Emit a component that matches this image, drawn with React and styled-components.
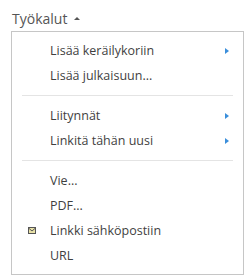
import React from 'react';
import styled, { createGlobalStyle } from 'styled-components';

const Global = createGlobalStyle`
  html, body { margin: 0; padding: 0; background: #fff; }
  body { font-family: "Open Sans", "Liberation Sans", sans-serif; color: #444; }
`;

const Wrap = styled.div`
  width: 247px;
  height: 280px;
  padding: 8px 4px 0 11px;
  box-sizing: border-box;
`;

const Toggle = styled.div`
  display: flex;
  align-items: center;
  gap: 7px;
  height: 20px;
  padding-left: 1px;
  font-size: 14px;
  color: #555;
`;

const Caret = styled.span`
  width: 0;
  height: 0;
  border-left: 3px solid transparent;
  border-right: 3px solid transparent;
  border-bottom: 3px solid #555;
`;

const Menu = styled.div`
  margin-top: 3px;
  width: 233px;
  box-sizing: border-box;
  border: 1px solid #c6c6c6;
  padding: 6px 0 6px;
`;

const Item = styled.div`
  display: flex;
  align-items: center;
  height: 25px;
  padding: 0 14px 0 16px;
  font-size: 12.5px;
  color: #3f3f3f;
`;

const IconSlot = styled.span`
  width: 22px;
  display: flex;
  align-items: center;
`;

const Label = styled.span`
  flex: 1;
`;

const SubArrow = styled.span`
  width: 0;
  height: 0;
  border-top: 3px solid transparent;
  border-bottom: 3px solid transparent;
  border-left: 4px solid #3a8edb;
`;

const Divider = styled.div`
  height: 1px;
  margin: 7px 10px 7px;
  background: #e4e4e4;
`;

const Mail = () => (
  <svg width="8" height="7" viewBox="0 0 8 7">
    <rect x="0.5" y="0.5" width="7" height="6" fill="#e9e2a8" stroke="#555" />
    <path d="M0.5 1 L4 4 L7.5 1" fill="none" stroke="#555" />
  </svg>
);

const groups = [
  [
    { label: 'Lisää keräilykoriin', sub: true },
    { label: 'Lisää julkaisuun...' },
  ],
  [
    { label: 'Liitynnät', sub: true },
    { label: 'Linkitä tähän uusi', sub: true },
  ],
  [
    { label: 'Vie...' },
    { label: 'PDF...' },
    { label: 'Linkki sähköpostiin', icon: true },
    { label: 'URL' },
  ],
];

export default function App() {
  return (
    <Wrap>
      <Global />
      <Toggle>
        Työkalut <Caret />
      </Toggle>
      <Menu>
        {groups.map((g, gi) => (
          <React.Fragment key={gi}>
            {gi > 0 && <Divider />}
            {g.map((it) => (
              <Item key={it.label}>
                <IconSlot>{it.icon && <Mail />}</IconSlot>
                <Label>{it.label}</Label>
                {it.sub && <SubArrow />}
              </Item>
            ))}
          </React.Fragment>
        ))}
      </Menu>
    </Wrap>
  );
}
